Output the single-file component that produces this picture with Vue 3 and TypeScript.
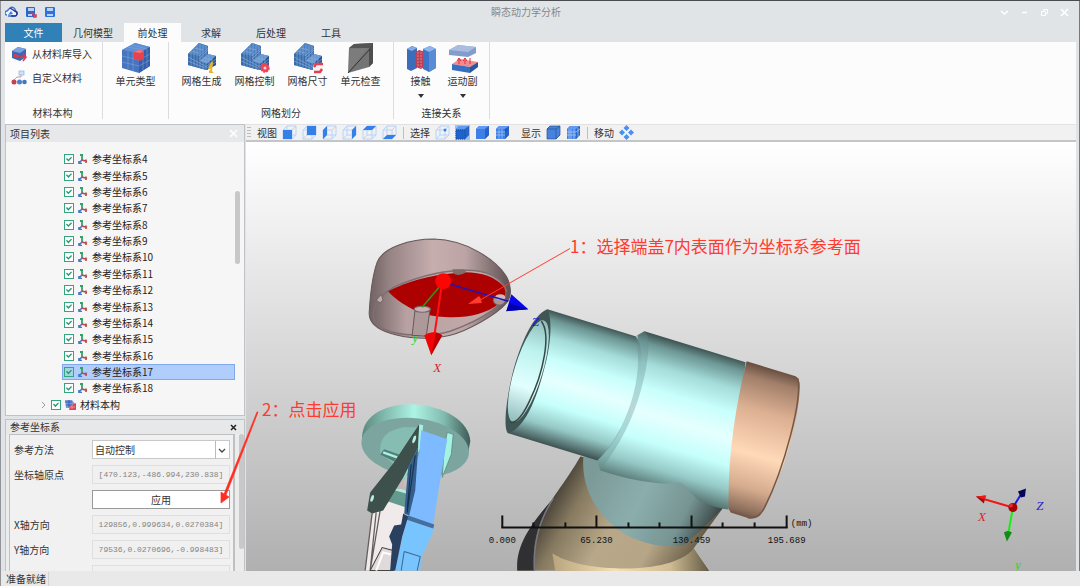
<script setup lang="ts">
import { ref } from 'vue'

interface MeshTool { label: string; badge: string }
interface TreeRow { id: number; label: string; checked: boolean }

const tabs = [
  { label: '文件', kind: 'file' },
  { label: '几何模型', kind: 'wide' },
  { label: '前处理', kind: 'active' },
  { label: '求解', kind: '' },
  { label: '后处理', kind: '' },
  { label: '工具', kind: '' },
]

const meshTools: MeshTool[] = [
  { label: '网格生成', badge: 'bolt' },
  { label: '网格控制', badge: 'gear' },
  { label: '网格尺寸', badge: 'size' },
]

const rows = ref<TreeRow[]>(
  Array.from({ length: 15 }, (_, i) => ({ id: i + 4, label: `参考坐标系${i + 4}`, checked: true })),
)
const materialChecked = ref(true)
const selected = ref(17)

const viewFaces: { name: string; points: string }[] = [
  { name: '前视图', points: '1,5 10,5 10,14 1,14' },
  { name: '后视图', points: '5,1 14,1 14,10 5,10' },
  { name: '左视图', points: '1,5 5,1 5,10 1,14' },
  { name: '右视图', points: '10,5 14,1 14,10 10,14' },
  { name: '俯视图', points: '1,5 5,1 14,1 10,5' },
  { name: '仰视图', points: '1,14 5,10 14,10 10,14' },
]

const method = ref('自动控制')
const fields = [
  { id: 'axis-x', label: 'X轴方向', value: '129856,0.999634,0.0270384]' },
  { id: 'axis-y', label: 'Y轴方向', value: '79536,0.0270696,-0.998483]' },
  { id: 'axis-z', label: '', value: '' },
]

const majorTicks = [
  { x: 502, text: '0.000' },
  { x: 596, text: '65.230' },
  { x: 691, text: '130.459' },
  { x: 786, text: '195.689' },
]
const minorTicks = [533, 565, 628, 659, 722, 754]
</script>

<template>
  <div class="window">
    <svg class="defs" aria-hidden="true">
      <defs>
        <symbol id="wire" viewBox="0 0 15 15">
          <path d="M1 5h9v9H1zM5 1h9v9H5zM1 5l4-4M10 5l4-4M10 14l4-4M1 14l4-4" fill="none" stroke="#b9d3f8" />
        </symbol>
        <symbol id="solid" viewBox="0 0 15 15">
          <path d="M1 4l3-3h10v9l-4 4H1z" fill="#3f80e6" />
          <path d="M1 4l3-3h10l-4 3z" fill="#609af2" />
          <path d="M10 4l4-3v9l-4 4z" fill="#2863c7" />
        </symbol>
        <symbol id="axes" viewBox="0 0 10 10">
          <path d="M4 6V1M2 1h3" stroke="#35a26b" stroke-width="1.800" fill="none" />
          <path d="M4 6L1 9M1 7v2.500h3" stroke="#4477d4" stroke-width="1.600" fill="none" />
          <path d="M4 6l5 1.500M8 5.500v3.500" stroke="#b9484d" stroke-width="1.600" fill="none" />
        </symbol>
        <symbol id="mesh" viewBox="0 0 32 32">
          <path d="M2 12L13 1l9 3v8l8 2v9l-10 5L2 23z" fill="#3d6fb0" />
          <path d="M2 12L13 1l9 3-9 10z" fill="#4c80c0" />
          <path d="M13 19l9-7 8 2-9 8z" fill="#6696d2" />
          <path d="M2 12l11 2v5l8 3v6L2 23z" fill="#366aa9" />
          <path d="M21 22l9-8v9l-9 5z" fill="#275590" />
          <path d="M2 15l19 10M2 19l17 7M5 9v15M8 7v18M11 3v23M14 1v25M17 3v24M20 4v24M23 12v14M26 13v12M5 9l8 2M8 6l9 2M15 18l8 2M18 16l8 2M13 14l9-8M13 17l9-9M21 24l9-7M21 26l9-6" stroke="#8fb0dc" stroke-width=".6" fill="none" />
        </symbol>
      </defs>
    </svg>

    <header class="titlebar">
      <div class="quick">
        <svg width="13" height="12" viewBox="0 0 13 12"><path d="M2 9a2 2 0 0 1 0-4l3-3c3-2 6 1 5 3 4 1 2 5 0 5H3" fill="#eef3fc" stroke="#3f6fd0" stroke-width="1.400" /><path d="M5 2l5 3c3 1 2 5 0 5H6" fill="none" stroke="#27379a" stroke-width="1.400" /><path d="M3 9l3-4 2 3z" fill="#3e82e4" /></svg>
        <button aria-label="另存为"><svg width="12" height="12" viewBox="0 0 12 12"><rect x="1" y="1" width="9" height="10" rx="1" fill="#2c67cf" /><path d="M3 2h6v3H3zM3 8h4v2H3z" fill="#b8d0f4" /><path d="M6 6l5 5M11 8v3H8" stroke="#e23b50" stroke-width="1.500" fill="none" /></svg></button>
        <button aria-label="保存"><svg width="12" height="12" viewBox="0 0 12 12"><rect x="1" y="1" width="10" height="10" rx="1" fill="#2f72dd" /><path d="M3 2h6v3H3zM3 8h6v2H3z" fill="#b8d4f8" /></svg></button>
      </div>
      <h1>瞬态动力学分析</h1>
      <div class="controls">
        <button aria-label="选项"><svg width="9" height="9" viewBox="0 0 9 9"><path d="M1 3l3.500 3L8 3" /></svg></button>
        <button aria-label="最小化"><svg width="9" height="9" viewBox="0 0 9 9"><path d="M2 4.500h5" /></svg></button>
        <button aria-label="还原"><svg width="9" height="9" viewBox="0 0 9 9"><path class="thin" d="M1.500 3.500h4v4h-4zM3.500 3V1.500h4v4H6" /></svg></button>
        <button aria-label="关闭"><svg width="9" height="9" viewBox="0 0 9 9"><path d="M1 1l7 7M8 1L1 8" /></svg></button>
      </div>
    </header>

    <nav class="tabs">
      <button v-for="t in tabs" :key="t.label" class="tab" :class="t.kind">{{ t.label }}</button>
    </nav>

    <section class="ribbon">
      <div class="group materials">
        <button class="row-tool">
          <svg width="16" height="16" viewBox="0 0 16 16"><path d="M1 5l6-4 8 2v8l-6 4-8-3z" fill="#3a69b5" /><path d="M1 5l6-4 8 2-6 4z" fill="#7ba2df" /><path d="M3 8l5 1v3l-5-1z" fill="#d93b50" /><path d="M9 11h6M12 8l3 3-3 4" fill="none" stroke="#e5384d" stroke-width="1.500" /></svg>
          从材料库导入
        </button>
        <button class="row-tool">
          <svg width="16" height="16" viewBox="0 0 16 16"><rect x="8" y="1" width="5" height="4" fill="#cfe2f6" stroke="#8bb5e3" stroke-width=".7" /><path d="M3 10l3-3h4V5" stroke="#df8f96" fill="none" /><circle cx="3" cy="12" r="2.500" fill="#c8404f" /><circle cx="8.500" cy="12" r="2.500" fill="#4d82cb" /><circle cx="13.500" cy="12" r="2.300" fill="#4276bf" /></svg>
          自定义材料
        </button>
        <p>材料本构</p>
      </div>
      <div class="group element">
        <button class="tool">
          <svg width="32" height="32" viewBox="0 0 32 32"><path d="M2 8L15 1l15 4v19L19 31 2 26z" fill="#4674bf" /><path d="M2 8L15 1l15 4-11 6z" fill="#5f8fd4" /><path d="M19 11l11-6v19l-11 7z" fill="#3560a8" /><path d="M2 14l17 4 11-6M2 20l17 4 11-6M8 9v18M13 10v19M23 9v19M27 7v18M8 5l16 3M12 3l15 4" stroke="#86abe0" stroke-width=".5" fill="none" /><path d="M14 10l4-2 6 1v7l-4 3-6-2z" fill="#e8434d" /><path d="M14 10l4-2 6 1-4 2z" fill="#f5777c" /></svg>
          单元类型
        </button>
      </div>
      <div class="group meshing">
        <div class="tools">
          <button v-for="m in meshTools" :key="m.label" class="tool">
            <svg width="32" height="32" viewBox="0 0 32 32">
              <use href="#mesh" />
              <path v-if="m.badge === 'bolt'" d="M25 20l-3 7h3l-2 2v2h5l-2-2 1-9z" fill="#e9b52c" />
              <g v-else-if="m.badge === 'gear'"><circle cx="26" cy="26" r="4" fill="#ef4457" stroke="#ef4457" stroke-width="1.500" stroke-dasharray="2 1" /><circle cx="26" cy="26" r="1.500" fill="#f8c9cf" /></g>
              <g v-else><rect x="21" y="21" width="10" height="10" rx="4" fill="#f5f0f2" /><path d="M22 25l2-3h7M30 27l-2 3h-6" fill="none" stroke="#e83d50" stroke-width="2.500" /></g>
            </svg>
            {{ m.label }}
          </button>
          <button class="tool">
            <svg width="32" height="32" viewBox="0 0 32 32"><path d="M4 6l5-4 19-1v20l-4 4L3 31z" fill="#747474" /><path d="M4 6l5-4 19-1-4 5z" fill="#545454" /><path d="M5 7l18-1L4 29z" fill="#7c7c7c" /><path d="M24 6l4-5v20l-4 4z" fill="#4e4e4e" /><path d="M3 31L25 7" stroke="#333" fill="none" /></svg>
            单元检查
          </button>
        </div>
        <p>网格划分</p>
      </div>
      <div class="group links">
        <div class="tools">
          <button class="tool">
            <svg width="32" height="32" viewBox="0 0 32 32"><path d="M2 7l5-3 5 2v20l-6 3-4-2z" fill="#3c6dbb" /><path d="M2 7l5-3 5 2-5 3z" fill="#83aae4" /><path d="M11 10l3-2 7 2v14l-5 3-5-2z" fill="#b94258" /><path d="M13 10v15M16 10v16" stroke="#ed7b81" stroke-dasharray="2 1" /><path d="M18 7l7-3 6 3v19l-7 4-6-3z" fill="#3d74c8" /><path d="M18 7l7-3 6 3-7 3z" fill="#90b5eb" /><path d="M24 10l7-3v19l-7 4z" fill="#5a8bd5" /></svg>
            接触<i class="caret" />
          </button>
          <button class="tool">
            <svg width="32" height="32" viewBox="0 0 32 32"><path d="M2 8l9-5 18 2v6l-8 4-19-2z" fill="#829ccb" /><path d="M2 8l9-5 18 2-8 5z" fill="#a8bde0" /><path d="M5 22l8-5 18 3-8 5z" fill="#f48a8b" /><path d="M5 22l18 3v6L5 28z" fill="#376ebf" /><path d="M23 25l8-5v5l-8 6z" fill="#2657a1" /><path d="M12 22v-6M18 22v-6M23 22v-6M10 19l2-3 2 3M16 19l2-3 2 3" stroke="#d92f42" fill="none" /></svg>
            运动副<i class="caret" />
          </button>
        </div>
        <p>连接关系</p>
      </div>
    </section>

    <main class="body">
      <aside class="side">
        <section class="panel tree-panel">
          <header class="panel-head"><h2>项目列表</h2><button class="close pale" aria-label="关闭项目列表"><svg width="9" height="9" viewBox="0 0 9 9"><path d="M1 1l7 7M8 1L1 8" /></svg></button></header>
          <div class="tree">
            <ul>
              <li v-for="r in rows" :key="r.id" class="leaf" :class="{ on: r.id === selected }" @click="selected = r.id">
                <label><input v-model="r.checked" type="checkbox"><svg width="10" height="10"><use href="#axes" /></svg>{{ r.label }}</label>
              </li>
              <li class="branch">
                <svg width="6" height="8" viewBox="0 0 6 8"><path d="M1 1l3 3-3 3" fill="none" stroke="#999" /></svg>
                <label><input v-model="materialChecked" type="checkbox"><svg width="11" height="10" viewBox="0 0 11 10"><path d="M0 0h7l3 4v4H1z" fill="#7a9bd8" /><path d="M0 2h7M1 5h6M4 0v7" stroke="#365db2" /><path d="M5 6l6-3v7H4z" fill="#de4656" /><path d="M5 7h5M7 5v4" stroke="#f3a5ac" stroke-width=".7" /></svg>材料本构</label>
              </li>
            </ul>
            <div class="track"><div class="thumb" /></div>
          </div>
        </section>

        <section class="panel form-panel">
          <header class="panel-head low"><h2>参考坐标系</h2><button class="close" aria-label="关闭参考坐标系"><svg width="9" height="9" viewBox="0 0 9 9"><path d="M2 2l5 5M7 2L2 7" /></svg></button></header>
          <div class="form-area">
            <form @submit.prevent>
              <label for="method">参考方法</label>
              <div class="select">
                <select id="method" v-model="method"><option>自动控制</option></select>
                <svg width="14" height="18" viewBox="0 0 14 18"><path d="M.5 0v18" stroke="#bbb" /><path d="M4 8l3 3 3-3" fill="none" stroke="#444" stroke-width="1.300" /></svg>
              </div>
              <label for="origin">坐标轴原点</label>
              <input id="origin" value="[470.123,-486.994,230.838]" disabled>
              <button class="apply">应用</button>
              <template v-for="f in fields" :key="f.id">
                <label :for="f.id">{{ f.label }}</label>
                <input :id="f.id" :value="f.value" disabled>
              </template>
            </form>
            <div class="track"><div class="thumb" /></div>
          </div>
        </section>
      </aside>

      <section class="stage">
        <div class="viewbar">
          <span class="grip" />
          <span class="caption">视图</span>
          <button v-for="v in viewFaces" :key="v.name" :aria-label="v.name"><svg width="15" height="15" viewBox="0 0 15 15"><use href="#wire" /><polygon :points="v.points" fill="#3380e8" /></svg></button>
          <span class="bar" />
          <span class="caption">选择</span>
          <button aria-label="选择点"><svg width="15" height="15" viewBox="0 0 15 15"><use href="#wire" /><circle cx="10" cy="5" r="1.500" fill="#3380e8" /></svg></button>
          <button class="picked" aria-label="选择面"><svg width="15" height="15" viewBox="0 0 15 15"><use href="#solid" /><path d="M1 5h9v9H1z" fill="#1e62cb" stroke="#174a9d" stroke-dasharray="1 1" /></svg></button>
          <button aria-label="选择体"><svg width="15" height="15"><use href="#solid" /></svg></button>
          <button aria-label="选择单元"><svg width="15" height="15" viewBox="0 0 15 15"><use href="#solid" /><path d="M1 7h9M1 10h9M4 4v10M7 4v10" stroke="#a6c6f5" fill="none" stroke-width=".7" /><circle cx="11" cy="5" r="1.500" fill="#1e5abc" /></svg></button>
          <span class="caption show">显示</span>
          <button aria-label="实体显示"><svg width="15" height="15" viewBox="0 0 15 15"><use href="#solid" /><path d="M1 4h9v10H1zM1 4l3-3h10v9l-4 4M10 4l4-3" stroke="#285295" fill="#4782dc" stroke-width=".7" /></svg></button>
          <button aria-label="网格显示"><svg width="15" height="15" viewBox="0 0 15 15"><use href="#solid" /><path d="M1 7h9l4-3M1 10h9M3 4v10M5 4v10M8 4v10M12 3v9" stroke="#b9d1f4" fill="none" stroke-width=".7" /></svg></button>
          <span class="bar" />
          <span class="caption">移动</span>
          <button aria-label="移动"><svg width="15" height="15" viewBox="0 0 15 15"><path d="M7.500 0l3 3-3 3-3-3zM7.500 9l3 3-3 3-3-3zM3 4.500l3 3-3 3-3-3zM12 4.500l3 3-3 3-3-3z" fill="#4a90ed" /></svg></button>
        </div>

        <div class="viewport">
          <svg class="scene" viewBox="246 142 829 429" preserveAspectRatio="xMinYMin slice">
            <defs>
              <linearGradient id="tubeA" gradientUnits="userSpaceOnUse" x1="592" y1="322" x2="555" y2="447">
                <stop offset="0" stop-color="#3c504f" /><stop offset=".07" stop-color="#6c9694" /><stop offset=".2" stop-color="#a4dcd9" /><stop offset=".36" stop-color="#c9fffc" /><stop offset=".52" stop-color="#e6ffff" /><stop offset=".7" stop-color="#c5fffb" /><stop offset=".86" stop-color="#94c8c5" /><stop offset="1" stop-color="#3f5453" />
              </linearGradient>
              <linearGradient id="tubeB" gradientUnits="userSpaceOnUse" x1="695" y1="346" x2="653" y2="490">
                <stop offset="0" stop-color="#3c504f" /><stop offset=".07" stop-color="#6c9694" /><stop offset=".2" stop-color="#a4dcd9" /><stop offset=".36" stop-color="#c9fffc" /><stop offset=".52" stop-color="#e6ffff" /><stop offset=".7" stop-color="#c5fffb" /><stop offset=".86" stop-color="#94c8c5" /><stop offset="1" stop-color="#506c6a" />
              </linearGradient>
              <linearGradient id="bore" x1="0" y1="0" x2="0" y2="1">
                <stop offset="0" stop-color="#8fbcb9" /><stop offset=".3" stop-color="#bdf3ef" /><stop offset=".65" stop-color="#e2ffff" /><stop offset="1" stop-color="#8fbab8" />
              </linearGradient>
              <linearGradient id="copper" gradientUnits="userSpaceOnUse" x1="775" y1="367" x2="733" y2="516">
                <stop offset="0" stop-color="#5b4539" /><stop offset=".1" stop-color="#a27f6a" /><stop offset=".3" stop-color="#dcb092" /><stop offset=".58" stop-color="#ffd9b8" /><stop offset=".8" stop-color="#d5ab8e" /><stop offset=".95" stop-color="#8a6b59" /><stop offset="1" stop-color="#5e493d" />
              </linearGradient>
              <linearGradient id="neck" gradientUnits="userSpaceOnUse" x1="553" y1="497" x2="698" y2="580">
                <stop offset="0" stop-color="#4c453a" /><stop offset=".14" stop-color="#85795f" /><stop offset=".38" stop-color="#b8a788" /><stop offset=".65" stop-color="#b6a587" /><stop offset=".86" stop-color="#746851" /><stop offset="1" stop-color="#39342b" />
              </linearGradient>
              <linearGradient id="tealneck" gradientUnits="userSpaceOnUse" x1="590" y1="480" x2="708" y2="540">
                <stop offset="0" stop-color="#7c9a98" /><stop offset=".4" stop-color="#8baead" /><stop offset=".75" stop-color="#769492" /><stop offset="1" stop-color="#34403f" />
              </linearGradient>
              <linearGradient id="foot" x1="0" x2="1">
                <stop offset="0" stop-color="#b8a57f" /><stop offset=".4" stop-color="#f5dfb4" /><stop offset=".75" stop-color="#cfbc94" /><stop offset="1" stop-color="#625943" />
              </linearGradient>
              <linearGradient id="cap" x1="0" x2="1">
                <stop offset="0" stop-color="#706162" /><stop offset=".15" stop-color="#988485" /><stop offset=".45" stop-color="#c6adae" /><stop offset=".68" stop-color="#bca4a5" /><stop offset="1" stop-color="#5d5051" />
              </linearGradient>
              <linearGradient id="capin" x1="0" x2="1">
                <stop offset="0" stop-color="#776768" /><stop offset=".25" stop-color="#b8a1a2" /><stop offset=".8" stop-color="#c2aaab" /><stop offset="1" stop-color="#968284" />
              </linearGradient>
              <linearGradient id="rim" x1="0" x2="1">
                <stop offset="0" stop-color="#5d887f" /><stop offset=".22" stop-color="#83bcb0" /><stop offset=".48" stop-color="#adf3e5" /><stop offset=".75" stop-color="#83bdb1" /><stop offset="1" stop-color="#3d5c56" />
              </linearGradient>
            </defs>

            <!-- end cap -->
            <path d="M369 313C370 295 372 276 377 262C383 247 410 239 434 239C466 240 495 259 506 276C511 285 512 296 506 303C496 315 466 331 450 335C430 340 405 338 390 333C377 329 369 323 369 313Z" fill="url(#cap)" stroke="#665859" />
            <path d="M373 314C374 302 384 291 398 285C422 275 447 270 466 270C488 270 501 278 506 290C505 305 482 319 450 331C430 337 399 336 384 329C377 325 373 320 373 314Z" fill="url(#capin)" stroke="#806f70" stroke-width="1.500" />
            <path d="M388 291C407 281 430 275 453 273C475 270 493 275 503 286C507 292 505 298 499 303C487 313 470 317 453 317C430 317 418 313 402 303Q393 297 388 291Z" fill="#ad0000" />
            <path d="M453 273q5 4 13-1l-2-3h-12z" fill="#7f6e6f" />
            <path d="M376 300l5-6 2 6-3 3z" fill="#c0acad" stroke="#756667" />
            <path d="M415 308h15l-4 28-14-1z" fill="#ae999a" stroke="#665859" />
            <ellipse cx="422" cy="309" rx="8" ry="3" fill="#c8b1b2" stroke="#786869" />
            <ellipse cx="499" cy="300" rx="6" ry="5" fill="#aa9697" stroke="#736465" />
            <ellipse cx="500" cy="297" rx="5" ry="3" fill="#cdb9ba" />
            <path d="M443 282L422 307" stroke="#2c9a12" stroke-width="1.500" />
            <path d="M443 282L508 301" stroke="#2413b5" stroke-width="1.500" />
            <path d="M442 282L434 336" stroke="#ff1111" stroke-width="2" />
            <circle cx="443" cy="281" r="8" fill="#fb0505" />
            <path d="M424 335q9-6 18 0l-11 20z" fill="#f00404" /><path d="M436 332l6 3-11 20z" fill="#b80000" />
            <path d="M511 294l17 15-22 2z" fill="#0707ef" /><path d="M506 311l22-2-19-6z" fill="#0000ac" />

            <!-- flange and linkage -->
            <path d="M362 441C360 417 382 404 411 404C444 405 469 421 470 441L467 457L363 448Z" fill="url(#rim)" />
            <ellipse cx="415" cy="447" rx="54" ry="29" transform="rotate(7 415 447)" fill="#7ca59f" />
            <path d="M380 453C379 438 386 430 404 427H421L410 458L393 463Z" fill="#86bdb2" /><path d="M380 454l4-5 15 5-5 7z" fill="#517d75" /><path d="M383 452l14 5" stroke="#a8f1e3" stroke-width="2.500" />
            <path d="M447 432l6 2-2 20-9 23 2-30z" fill="#a4f2e3" stroke="#568077" stroke-width=".7" />
            <path d="M423 425l-3 23-15 29-8 22-14 13 11-36z" fill="#8bd2c4" />
            <path d="M388 502l16-20 2 30-11 26-2 32h-28l7-56z" fill="#f1eaea" />
            <path d="M372 513l-7 57M376 512l-6 58M380 510l-10 60" stroke="#655e60" stroke-width="1.300" />
            <path d="M370 570l12-23 11 3v20z" fill="#e1dada" stroke="#474448" /><path d="M376 570l7-18 8 2" fill="none" stroke="#fff" stroke-width="2" />
            <path d="M403 479l3 11-14-3z" fill="#c3b7b8" /><path d="M393 487l13 5v15l-18-6z" fill="#639a8d" /><path d="M392 488l14 4" stroke="#a9efe1" stroke-width="2" />
            <path d="M419 424l-1 24-15 29-20 33-11 3-5-3 3-18 23-29z" fill="#3d504c" />
            <ellipse cx="414" cy="439" rx="1.500" ry="4" transform="rotate(18 414 439)" fill="#b9eee4" /><ellipse cx="372" cy="498" rx="1.500" ry="3.500" transform="rotate(18 372 498)" fill="#b9eee4" />
            <path d="M423 425l-3 23-17 31 15-32 1-23z" fill="#a5f0e1" />
            <path d="M421 430l26 9-6 34-8 51-25-7-2-25 13-39z" fill="#7ebaff" />
            <path d="M418 447l-3 43-6 25-5-2 4-46z" fill="#345d8b" /><path d="M415 455l-8 57M411 464l-4 45" stroke="#142f50" />
            <path d="M408 515l26 9-2 10-11 23-1 13h-25l7-33z" fill="#78c4ff" /><path d="M408 515l26 9-1 4-27-9z" fill="#456f9d" />
            <path d="M403 513l5 3-6 20-7 34h-5l2-26-3-8 5-11 7-1z" fill="#29415f" />
            <path d="M404 551l16 5-3 14M404 551l-3 19" fill="none" stroke="#38658f" />

            <!-- housing -->
            <path d="M580 456C566 480 557 490 552 499C536 518 518 541 517 570H708L693 548L722 508L680 470Z" fill="url(#neck)" />
            <path d="M552 499C532 522 515 544 517 570H534C532 550 534 526 552 499Z" fill="#303032" /><path d="M553 498C537 522 533 548 534 570" fill="none" stroke="#777781" stroke-width="1.500" />
            <path d="M552 553C574 566 603 568 630 568C660 567 684 560 693 548L709 571H555Z" fill="url(#foot)" />
            <path d="M583 456C580 493 602 519 623 533C640 542 660 548 683 545L700 530L722 508L670 470Z" fill="url(#tealneck)" />
            <path d="M644 331L745 362L728 509C716 508 705 503 699 500C690 494 685 483 679 482C666 485 637 482 600 470L597 460C625 429 644 374 637 335Z" fill="url(#tubeB)" />
            <path d="M547 309L635 336C650 350 637 423 597 460L508 433Z" fill="url(#tubeA)" />
            <path d="M635 336L644 331C651 335 648 363 641 388C633 418 620 444 600 470L597 460C625 433 645 377 635 336Z" fill="#63908e" opacity=".35" />
            <path d="M547 309C552 318 551 343 544 368C536 400 524 428 508 433C503 430 505 404 512 374C520 343 533 314 547 309Z" fill="#405655" />
            <ellipse cx="528" cy="371" rx="14" ry="53" transform="rotate(17 528 371)" fill="url(#bore)" />
            <path d="M541 321C551 334 543 373 529 401C522 416 516 423 510 422" fill="none" stroke="#354746" stroke-width="1.500" />
            <path d="M746 361L795 376Q800 379 799 389C798 425 779 484 761 513Q757 519 749 518L730 512L728 508C727 457 735 405 746 361Z" fill="url(#copper)" />
            <path d="M797 378C802 398 784 467 764 507Q758 519 747 517" fill="none" stroke="#745747" stroke-width="1.500" />

            <!-- scale -->
            <g stroke="#111" stroke-width="2" fill="none">
              <path d="M501 527H787" />
              <path v-for="t in majorTicks" :key="t.x" :d="`M${t.x} 515v12`" />
              <path v-for="x in minorTicks" :key="x" :d="`M${x} 522v5`" />
            </g>
            <g class="scale-text"><text v-for="t in majorTicks" :key="t.text" :x="t.x" y="543">{{ t.text }}</text><text x="801" y="526">(mm)</text></g>

            <!-- orientation triad -->
            <path d="M1012 507L981 498" stroke="#f11616" stroke-width="2" /><path d="M975 496l10-1-2 8z" fill="#9b0f0f" /><path d="M975 496l10-1-1 4z" fill="#f01717" />
            <path d="M1012 507l-5 28" stroke="#15ef15" stroke-width="2" /><path d="M1003 532q4-3 8 0l-5 9z" fill="#128b18" />
            <path d="M1012 507l8-13" stroke="#1919e8" stroke-width="2" /><path d="M1017 491l8-3-1 8-4 1z" fill="#060658" />
            <circle cx="1012" cy="507" r="4.500" fill="#a50505" /><circle cx="1010" cy="505" r="2" fill="#e52a2a" />

            <g class="axis-text">
              <text x="437" y="372" fill="#d21f2b">X</text><text x="415" y="342" fill="#19d71c">y</text><text x="535" y="326" fill="#1919d9">Z</text>
              <text x="981" y="521" fill="#d62630">X</text><text x="1039" y="510" fill="#2525ce">Z</text><text x="1017" y="568" fill="#20da28">y</text>
            </g>
          </svg>
        </div>
      </section>
    </main>

    <footer class="status"><span>准备就绪</span></footer>

    <svg class="notes" viewBox="0 0 1080 586" preserveAspectRatio="xMinYMin meet">
      <path d="M570 248L481 299 479 296 468 304 482 303 481 300 570 249z" fill="#ff3b30" />
      <path d="M258 412L226 495 229 497 221 503 221 492 224 494 257 412z" fill="#ff2d22" stroke="#ff2d22" stroke-width=".7" />
      <text x="570" y="253">1：选择端盖7内表面作为坐标系参考面</text>
      <text x="262" y="416">2：点击应用</text>
    </svg>
  </div>
</template>

<style>
html, body { margin: 0; }
</style>

<style scoped>
* { box-sizing: border-box; }
.window {
  position: relative; display: flex; flex-direction: column; height: 100vh; overflow: hidden;
  padding: 0 4px 0 5px; background: #e1e4e7; border-top: 1px solid #4a4b50;
  box-shadow: inset 1px 0 #939499, inset -1px 0 #77797e;
  font: 10px/14px "Noto Sans CJK SC", "Noto Sans", sans-serif; color: #333;
}
button, input, select { font: inherit; color: inherit; }
button { display: flex; align-items: center; padding: 0; border: 0; background: none; }
h1, h2, p, ul { margin: 0; padding: 0; font: inherit; }
.defs { position: absolute; width: 0; height: 0; }
svg { flex: none; }

.titlebar { display: grid; grid-template-columns: 1fr auto 1fr; align-items: center; height: 22px; flex: none; padding-right: 7px; }
.titlebar h1 { padding-right: 22px; color: #85878a; }
.quick { display: flex; gap: 7px; }
.controls { display: flex; gap: 11px; justify-content: flex-end; }
.controls path { fill: none; stroke: #fff; stroke-width: 1.500; }
.controls .thin { stroke-width: 1; }

.tabs { display: flex; height: 19px; flex: none; }
.tab { justify-content: center; width: 60px; }
.tab.file { width: 57px; background: #3181b9; color: #fff; }
.tab.wide { width: 62px; }
.tab.active { width: 57px; background: #fcfcfc; }

.ribbon { display: flex; height: 82px; flex: none; background: #fcfcfc; }
.group { display: flex; flex-direction: column; align-items: center; margin-bottom: 5px; border-right: 1px solid #dcdcde; }
.group p { margin-top: auto; line-height: 12px; }
.materials { width: 98px; align-items: stretch; padding-left: 6px; }
.materials p { text-align: center; padding-right: 8px; }
.row-tool { gap: 5px; height: 24px; white-space: nowrap; }
.element { width: 66px; }
.meshing { width: 225px; }
.links { width: 96px; }
.tools { display: flex; gap: 13px; }
.links .tools { gap: 10px; }
.tool { flex-direction: column; min-width: 40px; white-space: nowrap; }
.links .tool { min-width: 32px; }
.caret { margin-top: 6px; border: 3px solid transparent; border-top: 4px solid #333; border-bottom: 0; }

.body { display: flex; flex: 1; min-height: 0; gap: 1px; }
.side { display: flex; flex-direction: column; gap: 3px; width: 240px; flex: none; }
.panel { display: flex; flex-direction: column; border: 1px solid #bfc2c6; min-height: 0; }
.tree-panel { flex: 1; background: #f6f6f6; }
.form-panel { height: 152px; flex: none; background: #ececed; border-bottom: 0; }
.panel-head { display: flex; justify-content: space-between; align-items: center; height: 17px; flex: none; padding: 0 6px 0 4px; background: #e6e8ea; }
.panel-head.low { height: 14px; }
.close path { fill: none; stroke: #222; stroke-width: 1.500; }
.close.pale path { stroke: #fff; }

.tree { display: flex; flex: 1; min-height: 0; }
.tree ul { display: grid; grid-auto-rows: 1fr; flex: 1; padding: 9px 0 2px; list-style: none; color: #1c1c1c; }
.leaf { display: flex; margin-left: 56px; padding-left: 1px; border: 1px solid transparent; }
.leaf.on { background: #b1cdfc; border-color: #7fa9ee; }
.branch { display: flex; align-items: center; gap: 4px; margin-left: 35px; }
.tree label { display: flex; align-items: center; gap: 4px; }
.tree input { appearance: none; display: grid; place-items: center; width: 10px; height: 10px; margin: 0; border: 1px solid #35a57d; background: #fff; }
.tree input:checked::before { content: ""; width: 6px; height: 6px; background: #289a70; clip-path: polygon(0 45%, 15% 30%, 40% 55%, 85% 10%, 100% 25%, 40% 90%); }
.tree .on input { background: #a5d3e6; }
.track { width: 9px; flex: none; }
.thumb { width: 5px; border-radius: 3px; background: #c8c8c8; }
.tree .thumb { height: 73px; margin-top: 49px; }

.form-area { display: flex; flex: 1; min-height: 0; padding-left: 3px; overflow: hidden; }
form { display: grid; grid-template-columns: 78px 1fr; grid-auto-rows: 19px; gap: 6px 0; align-content: start; flex: 1; padding: 5px 3px 0 4px; overflow: hidden; border: 1px solid #bfc0c2; border-right-width: 2px; border-bottom: 0; background: #f1f1f1; }
form label { display: flex; align-items: center; }
form input { min-width: 0; width: 100%; height: 19px; padding: 0 1px; border: 1px solid #dfdfdf; background: #f0f0f0; color: #858585; font: 8px "Liberation Mono", monospace; text-align: center; }
.select { position: relative; display: flex; }
.select select { appearance: none; width: 100%; padding: 0 2px; border: 1px solid #c8c8c8; border-radius: 0; background: #fff; }
.select svg { position: absolute; right: 1px; top: 1px; pointer-events: none; }
.apply { grid-column: 2; justify-content: center; border: 1px solid #999; background: #fff; }
.form-area .track { padding-left: 4px; }
.form-area .thumb { height: 115px; }

.stage { display: flex; flex-direction: column; flex: 1; min-width: 0; }
.viewbar { display: flex; align-items: center; height: 18px; flex: none; gap: 5px; padding-left: 1px; background: #f1f1f2; border-top: 1px solid #e2e2e4; border-bottom: 2px solid #c4c5c8; }
.grip { width: 4px; height: 13px; background: radial-gradient(circle, #bbb 1px, transparent 1px) 0 0 / 2px 3px; }
.caption { padding: 0 1px; }
.caption.show { margin-left: 5px; }
.viewbar .caption + button { margin-left: -1px; }
.bar { width: 1px; height: 12px; margin-left: 1px; background: #bfbfbf; }
.picked { background: #9dc1f8; }
.viewport { flex: 1; min-height: 0; overflow: hidden; background: linear-gradient(#fff, #b0b0b0); }
.scene { display: block; width: 100%; height: 100%; }
.scale-text { font: 9px "Liberation Mono", monospace; text-anchor: middle; fill: #111; }
.axis-text { font: italic 13px "Liberation Serif", serif; text-anchor: middle; }

.status { display: flex; align-items: center; height: 15px; flex: none; margin: 0 -4px; padding-left: 5px; background: #e9e9ea; }
.status span { padding-right: 2px; border-right: 1px solid #d2d2d4; }
.notes { position: absolute; left: 0; top: -1px; width: 1080px; height: 586px; pointer-events: none; }
.notes text { font: 17px "Noto Sans CJK SC", sans-serif; fill: #ff3b30; }
</style>
